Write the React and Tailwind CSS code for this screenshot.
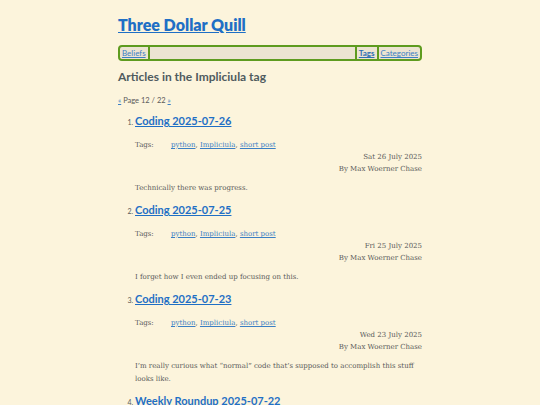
import React from 'react';

const posts = [
  {
    title: 'Coding 2025-07-26',
    date: 'Sat 26 July 2025',
    summary: 'Technically there was progress.',
  },
  {
    title: 'Coding 2025-07-25',
    date: 'Fri 25 July 2025',
    summary: 'I forget how I even ended up focusing on this.',
  },
  {
    title: 'Coding 2025-07-23',
    date: 'Wed 23 July 2025',
    summary: 'I\u2019m really curious what \u201cnormal\u201d code that\u2019s supposed to accomplish this stuff looks like.',
  },
  {
    title: 'Weekly Roundup 2025-07-22',
    date: 'Tue 22 July 2025',
    summary: 'Stuff happened.',
  },
];

const App = () => {
  return (
    <div className="min-h-screen bg-[#fcf4dc] text-[#5a5a5a] font-['DejaVu_Serif',serif]">
      <div className="w-[304px] mx-auto pt-[14px]">
        <h1 className="font-['Lato',sans-serif] font-extrabold text-[16px] leading-[22px]">
          <a href="#" className="text-[#1f6fc5] underline">Three Dollar Quill</a>
        </h1>

        <nav className="mt-[9px] flex items-stretch h-[16px] border-2 border-[#5e9b1f] rounded-[4px] bg-[#ece4d1] font-['Lato',sans-serif] text-[8px] leading-[12px]">
          <a href="#" className="px-[2px] text-[#3b7fc4] underline">Beliefs</a>
          <span className="w-[2px] bg-[#5e9b1f]"></span>
          <span className="flex-1"></span>
          <span className="w-[2px] bg-[#5e9b1f]"></span>
          <a href="#" className="px-[2px] font-bold text-[#2d6fb3] underline">Tags</a>
          <span className="w-[2px] bg-[#5e9b1f]"></span>
          <a href="#" className="px-[2px] text-[#3b7fc4] underline">Categories</a>
        </nav>

        <h2 className="mt-[8px] font-['Lato',sans-serif] font-bold text-[12px] leading-[16px] text-[#4f5b5e]">
          Articles in the Impliciula tag
        </h2>

        <p className="mt-[11px] text-[7.5px] leading-[10px] font-['Lato',sans-serif]">
          <a href="#" className="text-[#3b7fc4] underline">«</a> Page 12 / 22{' '}
          <a href="#" className="text-[#3b7fc4] underline">»</a>
        </p>

        <ol className="list-decimal pl-[17px] mt-[7px] text-[7px]">
          {posts.map((post) => (
            <li key={post.title} className="mb-[7px] marker:font-['Lato',sans-serif]">
              <h3 className="font-['Lato',sans-serif] font-bold text-[11px] leading-[16px]">
                <a href="#" className="text-[#1f6fc5] underline">{post.title}</a>
              </h3>
              <div className="mt-[11px] flex text-[7px] leading-[10px]">
                <span className="w-[36px]">Tags:</span>
                <span>
                  <a href="#" className="text-[#3b7fc4] underline">python</a>,{' '}
                  <a href="#" className="text-[#3b7fc4] underline">Impliciula</a>,{' '}
                  <a href="#" className="text-[#3b7fc4] underline">short post</a>
                </span>
              </div>
              <div className="mt-[1px] text-right text-[7px] leading-[12px]">
                <div>{post.date}</div>
                <div>By Max Woerner Chase</div>
              </div>
              <p className="mt-[7px] text-[7px] leading-[13px]">{post.summary}</p>
            </li>
          ))}
        </ol>
      </div>
    </div>
  );
};

export default App;
